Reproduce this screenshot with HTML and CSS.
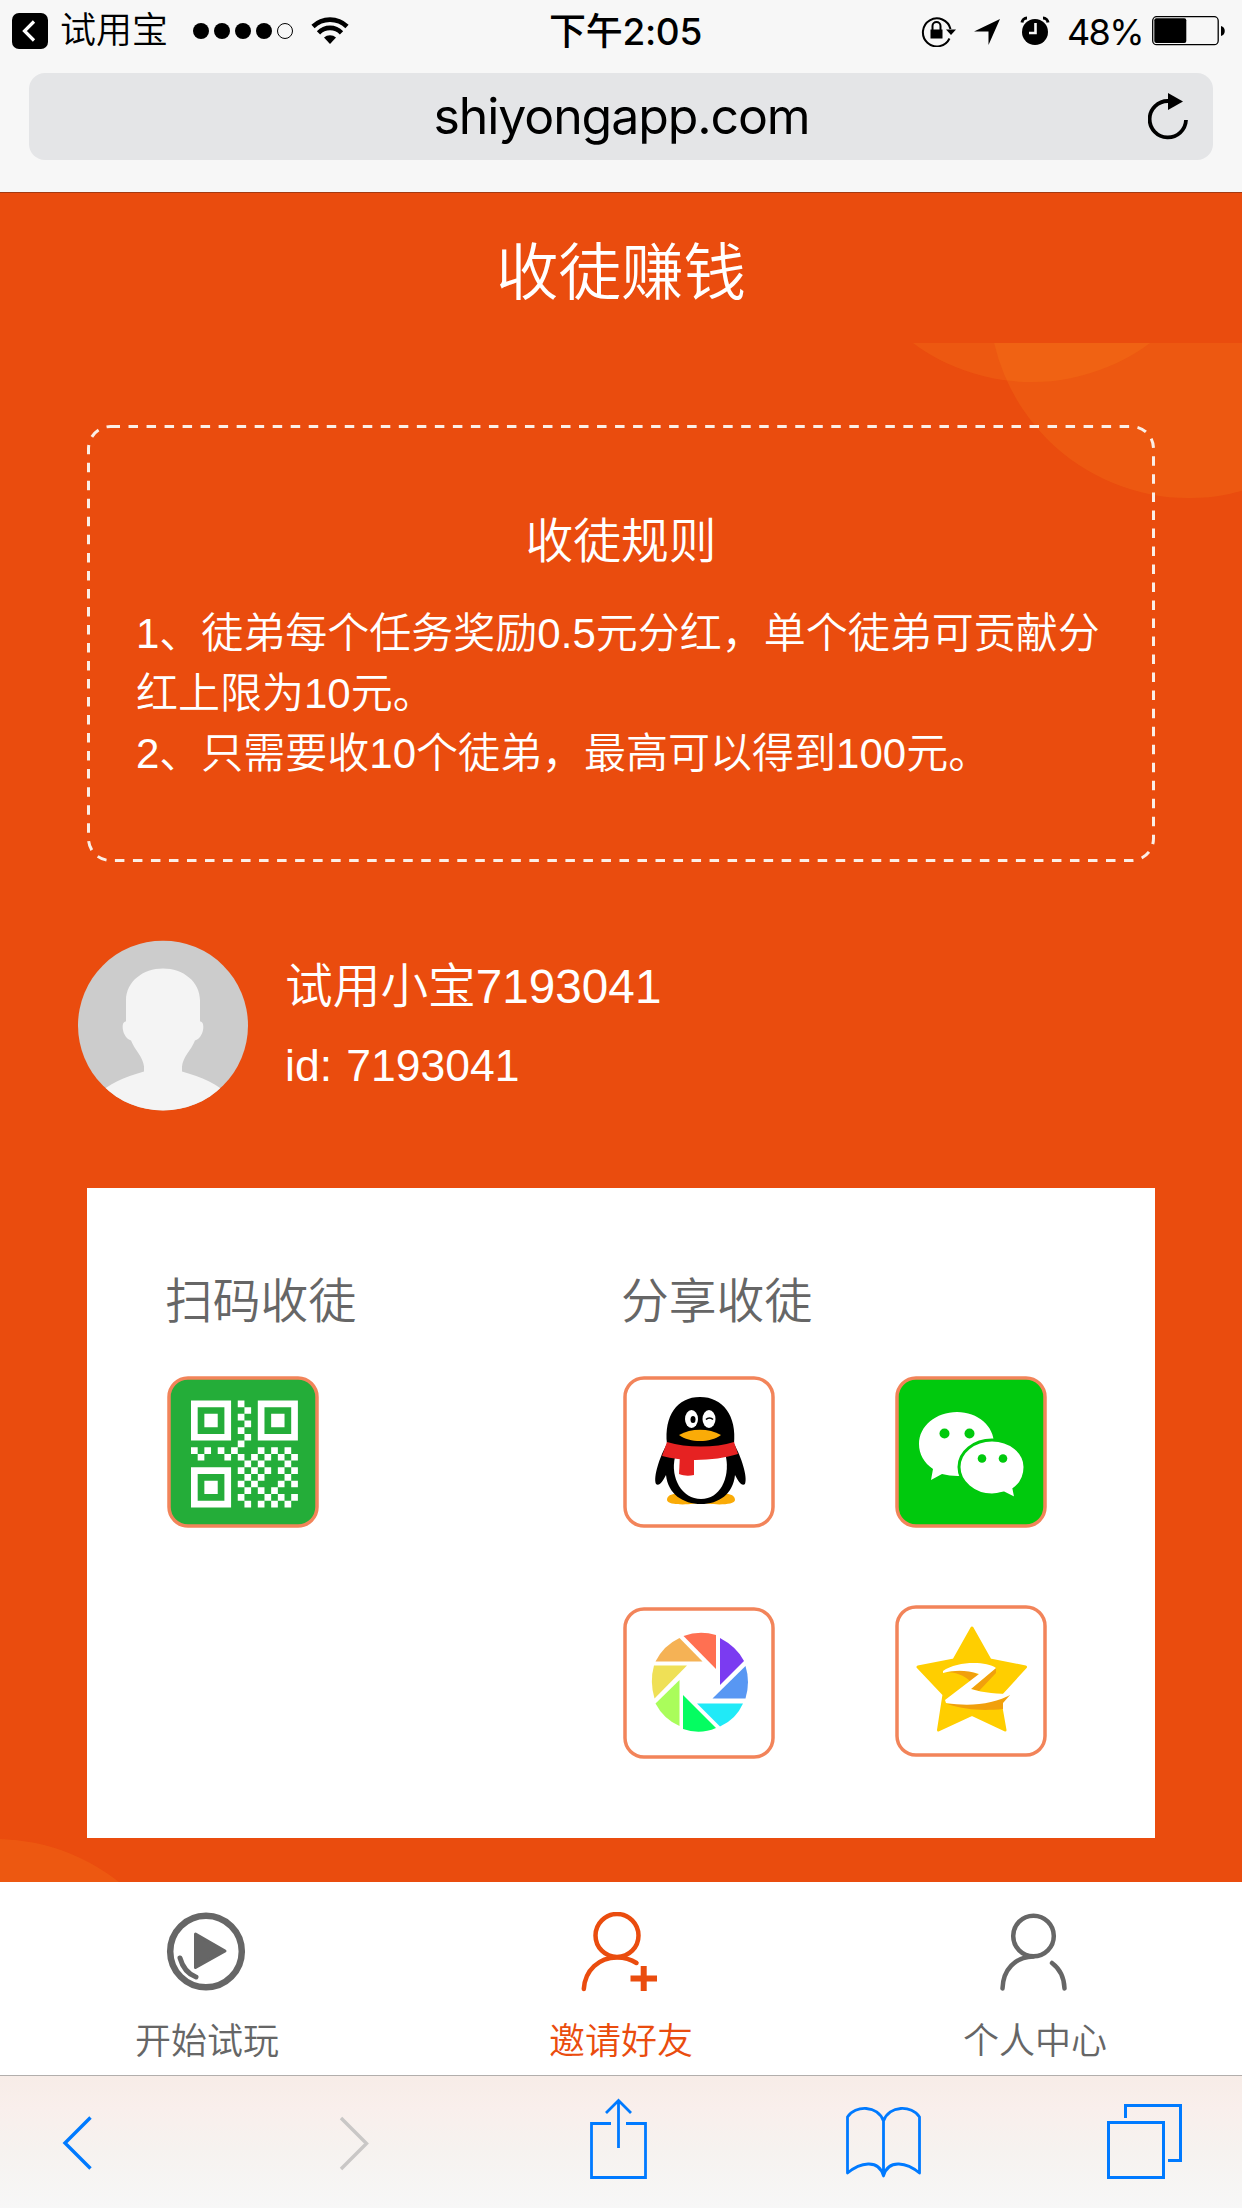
FILE: index.html
```html
<!DOCTYPE html>
<html lang="zh-CN">
<head>
<meta charset="utf-8">
<title>收徒赚钱</title>
<link rel="stylesheet" href="styles.css">
</head>
<body>
<div class="screen">
  <header class="browser">
    <div class="status">
      <div class="status-left">
        <svg class="back-app" width="36" height="36" viewBox="0 0 36 36"><rect width="36" height="36" rx="7"/><path d="M22 8.500l-9.500 9.500 9.500 9.500" fill="none" stroke="#fff" stroke-width="3.200"/></svg>
        <span class="status-app">试用宝</span>
        <svg class="signal" width="102" height="18" viewBox="0 0 102 18"><circle cx="9" cy="9" r="8"/><circle cx="30" cy="9" r="8"/><circle cx="51" cy="9" r="8"/><circle cx="72" cy="9" r="8"/><circle cx="93" cy="9" r="7.500" fill="none" stroke="#000"/></svg>
        <svg class="wifi" width="38" height="28" viewBox="0 0 38 28" fill="none" stroke="#000" stroke-width="4.600"><path d="M2 9.500a24.500 24.500 0 0 1 34 0M7.500 15.800a16 16 0 0 1 23 0"/><path d="M19 27l-6-6.500a9 9 0 0 1 12 0z" fill="#000" stroke="none"/></svg>
      </div>
      <span class="clock">下午2:05</span>
      <div class="status-right">
        <svg class="lock" width="36" height="32" viewBox="0 0 36 32"><path d="M28.500 23.500A14 14 0 1 1 29.500 14" fill="none" stroke="#000" stroke-width="2"/><path d="M25 14.500h10l-5 5.500z"/><rect x="9.500" y="14.500" width="12" height="9"/><path d="M11.500 15v-4a4 4 0 0 1 8 0v4" fill="none" stroke="#000" stroke-width="2"/></svg>
        <svg class="locate" width="28" height="28" viewBox="0 0 28 28"><path d="M27 1L15.500 27V13.500H1z"/></svg>
        <svg class="alarm" width="30" height="30" viewBox="0 0 30 30"><circle cx="15" cy="16" r="13"/><path d="M2 6.500a5 5 0 0 1 5-4.500M28 6.500A5 5 0 0 0 23 2" fill="none" stroke="#000" stroke-width="3"/><path d="M15.500 7v10H9" fill="none" stroke="#f7f7f7" stroke-width="2.600"/></svg>
        <span class="percent">48%</span>
        <svg class="battery" width="74" height="30" viewBox="0 0 74 30"><rect x=".7" y=".7" width="65.500" height="28" rx="4" fill="none" stroke="#000" stroke-width="1.300"/><rect x="2.300" y="2.300" width="32" height="24.800" rx="2"/><path d="M69 10c5 1 5 9 0 10z"/></svg>
      </div>
    </div>
    <div class="address">
      <span class="url">shiyongapp.com</span>
      <svg class="reload" width="42" height="48" viewBox="0 0 42 48"><path d="M38 28a18.200 18.200 0 1 1-18-19" fill="none" stroke="#000" stroke-width="3.800"/><path d="M20 1v17l15-8.500z"/></svg>
    </div>
  </header>

  <main class="page">
    <h1 class="page-title">收徒赚钱</h1>
    <div class="content">
      <svg class="bubbles" width="1242" height="1539" viewBox="0 0 1242 1539"><g fill="#fc8a1e" fill-opacity=".21"><circle cx="1031.500" cy="-160.500" r="199.500"/><circle cx="1189" cy="-45" r="200"/><circle cx="-5" cy="1696" r="200"/></g></svg>
      <section class="rules">
        <svg class="rules-frame" width="1068" height="437" viewBox="0 0 1068 437"><rect x="1.500" y="1.500" width="1065" height="434" rx="22" fill="none" stroke="#fbeee6" stroke-width="3" stroke-dasharray="9.500 8.520"/></svg>
        <h2 class="rules-title">收徒规则</h2>
        <p class="rule">1、徒弟每个任务奖励0.5元分红，单个徒弟可贡献分<br>红上限为10元。</p>
        <p class="rule">2、只需要收10个徒弟，最高可以得到100元。</p>
      </section>
      <section class="user">
        <svg class="avatar" width="170" height="171" viewBox="0 0 170 170"><defs><clipPath id="round"><circle cx="85" cy="85" r="85"/></clipPath></defs><g clip-path="url(#round)"><path fill="#ccc" d="M0 0h170v170H0z"/><path fill="#f4f4f4" d="M48 81V60C48 41 65 28 85 28s37 13 37 32v21c4 0 4 7 2 12-2 4-4 6-7 7-4 10-12 16-13 26v5c20 6 36 12 46 24v30H20v-30c10-12 26-18 46-24v-5c-1-10-9-16-13-26-3-1-5-3-7-7-2-5-2-12 2-12z"/></g></svg>
        <div class="user-text">
          <div class="user-name">试用小宝7193041</div>
          <div class="user-id">id: 7193041</div>
        </div>
      </section>
      <section class="card">
        <div class="scan">
          <h3 class="card-title">扫码收徒</h3>
          <svg class="app" width="152" height="152" viewBox="0 0 152 152"><rect x="2" y="2" width="148" height="148" rx="19" fill="#24ad39" stroke="#f2845a" stroke-width="3.500"/><g transform="translate(24 24.500) scale(6.680)" fill="#fff"><path fill-rule="evenodd" d="M0 0h6v6H0zM1 1v4h4V1zM2 2h2v2H2zM10 0h6v6h-6zM11 1v4h4V1zM12 2h2v2h-2zM0 10h6v6H0zM1 11v4h4v-4zM2 12h2v2H2z"/><path d="M7 0h1v1H7zM8 1h1v1H8zM7 2h1v1H7zM8 3h1v1H8zM7 4h1v1H7zM8 5h1v1H8zM7 6h1v1H7zM0 7h1v1H0zM2 7h1v1H2zM4 7h1v1H4zM6 7h1v1H6zM10 7h1v1h-1zM12 7h1v1h-1zM14 7h1v1h-1zM1 8h1v1H1zM5 8h1v1H5zM7 8h1v1H7zM9 8h1v1H9zM11 8h1v1h-1zM13 8h1v1h-1zM15 8h1v1h-1zM8 9h1v1H8zM10 9h1v1h-1zM14 9h1v1h-1zM7 10h1v1H7zM9 10h1v1H9zM11 10h1v1h-1zM13 10h1v1h-1zM15 10h1v1h-1zM8 11h1v1H8zM10 11h1v1h-1zM14 11h1v1h-1zM7 12h1v1H7zM9 12h1v1H9zM13 12h1v1h-1zM15 12h1v1h-1zM8 13h1v1H8zM10 13h1v1h-1zM12 13h1v1h-1zM7 14h1v1H7zM11 14h1v1h-1zM13 14h1v1h-1zM15 14h1v1h-1zM8 15h1v1H8zM10 15h1v1h-1zM12 15h1v1h-1zM14 15h1v1h-1z"/></g></svg>
        </div>
        <div class="share">
          <h3 class="card-title">分享收徒</h3>
          <div class="apps">
            <svg class="app" width="152" height="152" viewBox="0 0 152 152"><rect x="2" y="2" width="148" height="148" rx="19" fill="#fff" stroke="#f2845a" stroke-width="3.500"/><path d="M44 124c0-5 6-7 13-6l21 8c-7 3-34 4-34-2zM112 124c0-5-6-7-13-6l-21 8c7 3 34 4 34-2z" fill="#faab07"/><path d="M44 68c-3-28 10-47 33-47s37 19 34 47c7 12 14 33 11 40-3 3-7-3-10-9-2 19-16 29-34 29s-33-10-35-29c-3 6-7 12-10 9-3-7 4-28 11-40z"/><path d="M52 81h51c4 21-6 42-25 42S47 102 52 81z" fill="#fff"/><path d="M44 66c20 6 48 6 67 0l4 12c-22 7-54 8-76 2z" fill="#e62222"/><path d="M57 78h14v21c-5 1-10 1-15-1z" fill="#e62222"/><ellipse cx="68.500" cy="43" rx="6.500" ry="9" fill="#fff"/><ellipse cx="86" cy="43" rx="6.500" ry="9" fill="#fff"/><ellipse cx="70" cy="43.500" rx="2.500" ry="3.500"/><path d="M83 43.500c2-2 5-2 7 0" fill="none" stroke="#000" stroke-width="1.700"/><path d="M56 59c12-7 30-7 42 0-11 8-31 8-42 0z" fill="#faab07"/></svg>
            <svg class="app" width="152" height="152" viewBox="0 0 152 152"><rect x="2" y="2" width="148" height="148" rx="19" fill="#00c90d" stroke="#f2845a" stroke-width="3.500"/><path fill="#fff" d="M62 36c-21 0-38 14-38 32 0 10 5 19 14 25l-2 11 11-6c5 1 10 2 16 2 14 0 36-14 36-32 0-18-16-32-37-32z"/><circle cx="49.500" cy="57.500" r="5" fill="#00c90d"/><circle cx="74.500" cy="57.500" r="5" fill="#00c90d"/><path fill="#fff" stroke="#00c90d" stroke-width="3" d="M97 64c-18 0-33 12-33 27s15 28 33 28c4 0 8-1 12-2l12 6-2-10c7-5 11-13 11-22 0-15-15-27-33-27z"/><circle cx="87" cy="82.500" r="4.300" fill="#00c90d"/><circle cx="108" cy="82.500" r="4.300" fill="#00c90d"/></svg>
            <svg class="app" width="152" height="152" viewBox="0 0 152 152"><rect x="2" y="2" width="148" height="148" rx="19" fill="#fff" stroke="#f2845a" stroke-width="3.500"/><path fill="#ff7052" d="M60.500 29q16-6 32.500-1v34z"/><path fill="#7b3bf1" d="M97 31q17 9 24 23L97 78z"/><path fill="#5897f3" d="M122.500 59q5 16 0 32.500h-33z"/><path fill="#20eaf7" d="M74 96.500h46q-7 16-23 23z"/><path fill="#04fd61" d="M60 88l33 33q-16 7-33 1z"/><path fill="#aafd5b" d="M56.500 73v46q-16-7-24-22.500z"/><path fill="#efe056" d="M31 58.500h33l-32.500 33q-5-17-.5-33z"/><path fill="#f5b255" d="M56.500 31l23 23.500h-47q8-16 24-23.500z"/></svg>
            <svg class="app app-zone" width="152" height="152" viewBox="0 0 152 152"><rect x="2" y="2" width="148" height="148" rx="19" fill="#fff" stroke="#f2845a" stroke-width="3.500"/><path d="M77 23l18 32 35.500 7L104 91l6 34-33-15.500L43.500 125 49 89.500 23 62l36-7z" fill="#ffce00" stroke="#ffce00" stroke-width="3" stroke-linejoin="round"/><path d="M49 67c12 0 20 3 27 10l8-7-10-5zM101 63v5L84 86l-8-2zM52 99c20 6 35 7 56 5v-6l7-8z" fill="#f1a00c"/><path d="M48 66c14-10 43-10 53-3L76 84c12 4 28 5 41 5-18 10-41 13-66 9l-1-3 34-26c-13-4-24-4-36-1z" fill="#fff"/></svg>
          </div>
        </div>
      </section>
    </div>
  </main>

  <nav class="tabs">
    <a class="tab"><svg class="tab-play" width="80" height="80" viewBox="0 0 80 80"><circle cx="40" cy="39.500" r="35.800" fill="none" stroke="#666" stroke-width="6.500"/><path d="M29.500 22L59 39 29.500 55.500z" fill="#666" stroke="#666" stroke-width="3" stroke-linejoin="round"/><path d="M14 46q4 14.500 16 19" fill="none" stroke="#666" stroke-width="5" stroke-linecap="round"/></svg><span>开始试玩</span></a>
    <a class="tab tab-active"><svg width="80" height="80" viewBox="0 0 80 80" fill="none" stroke="#ea4c0e" stroke-width="4.500" stroke-linecap="round"><circle cx="36" cy="23.500" r="21.500"/><path d="M2.800 77C4 58 18 45.500 36 45.500q11 0 19.500 5.500"/><path d="M49.500 66.500h26.500M62.700 54v25" stroke-width="6" stroke-linecap="butt"/></svg><span>邀请好友</span></a>
    <a class="tab"><svg width="80" height="80" viewBox="0 0 80 80" fill="none" stroke="#666" stroke-width="4.500" stroke-linecap="round"><circle cx="38.500" cy="24" r="20.300"/><path d="M7.500 76.500C8 57.500 20 45 38.500 44.500M57 51q12 9 12.500 25.500"/></svg><span>个人中心</span></a>
  </nav>

  <footer class="toolbar">
    <svg class="nav-back" width="40" height="60" viewBox="0 0 40 60" fill="none" stroke="#007aff" stroke-width="3.400"><path d="M32.500 4.500L7 30l25.500 25.500"/></svg>
    <svg class="nav-forward" width="40" height="60" viewBox="0 0 40 60" fill="none" stroke="#c9c7c6" stroke-width="3.400"><path d="M5 5l25.500 25.500L5 56"/></svg>
    <svg class="nav-share" width="60" height="84" viewBox="0 0 60 84" fill="none" stroke="#007aff" stroke-width="2.800"><path d="M22 26.500H2.500v54h54v-54H37M29.500 51V3M17 16L29.500 3.500 42 16"/></svg>
    <svg class="nav-book" width="78" height="76" viewBox="0 0 78 76" fill="none" stroke="#007aff" stroke-width="2.800" stroke-linejoin="round"><path d="M38.500 71V16C33 0 10 0 2.500 12v56c12-10 31-15 36 3 5-18 24-13 36-3V12C67 0 44 0 38.500 16"/></svg>
    <svg class="nav-pages" width="78" height="78" viewBox="0 0 78 78" fill="none" stroke="#007aff" stroke-width="3"><path d="M3.500 20.500h55v55h-55zM20.500 16V3.500h55v55H63"/></svg>
  </footer>
</div>
</body>
</html>
```
FILE: styles.css
```css
* { box-sizing: border-box; }
body {
  margin: 0;
  font-family: "Liberation Sans", "Noto Sans CJK SC DemiLight", "Noto Sans CJK SC", sans-serif;
}
h1, h2, h3, p { margin: 0; font-weight: 350; }
svg { display: block; flex: none; }

.screen {
  width: 1242px;
  height: 2208px;
  display: flex;
  flex-direction: column;
  overflow: hidden;
}

/* Browser chrome */
.browser {
  height: 193px;
  background: #f7f7f7;
  border-bottom: 1px solid #a33a12;
  font-family: Inter, "Noto Sans CJK SC", sans-serif;
}
.status {
  height: 73px;
  padding: 0 16px 14px 12px;
  display: grid;
  grid-template-columns: 537px auto 1fr;
  align-items: center;
  font-size: 36px;
  line-height: 58px;
}
.status-left, .status-right { display: flex; align-items: center; }
.status-right { justify-content: flex-end; }
.status-app { margin-left: 12px; font-weight: 350; margin-top: -2px; }
.signal { margin-left: 24px; }
.wifi { margin-left: 17px; }
.clock { font-weight: 500; font-size: 37px; padding-top: 3px; letter-spacing: -0.3px; }
.locate { margin: 2px 0 0 16px; }
.alarm { margin-left: 19px; }
.percent { margin: 2px 9px 0 17px; letter-spacing: -1.6px; }
.address {
  height: 87px;
  margin: 0 29px;
  padding: 0 23px 2px 66px;
  display: flex;
  align-items: center;
  border-radius: 16px;
  background: #e4e5e7;
}
.url {
  flex: 1;
  text-align: center;
  font-size: 50px;
  letter-spacing: -1.1px;
}

/* Page */
.page {
  height: 1689px;
  color: #fff;
  background: #ea4c0e;
}
.page-title {
  height: 150px;
  padding-top: 5px;
  text-align: center;
  font-size: 62.500px;
  line-height: 150px;
}
.content {
  position: relative;
  height: 1539px;
  padding: 82px 87px 0;
  overflow: hidden;
}
.bubbles { position: absolute; left: 0; top: 0; }
.rules {
  position: relative;
  height: 437px;
  padding: 82px 49px 0;
}
.rules-frame { position: absolute; left: 0; top: 0; }
.rules-title {
  margin-bottom: 27px;
  text-align: center;
  font-size: 47.800px;
  line-height: 70px;
}
.rule { font-size: 42px; line-height: 60px; white-space: nowrap; }
.user {
  position: relative;
  display: flex;
  margin: 78px 0 77px -9px;
  font-weight: 350;
}
.user-text { padding: 12px 0 0 37px; }
.user-name { font-size: 47.700px; line-height: 70px; }
.user-id { font-size: 44.500px; line-height: 88px; word-spacing: 2px; }
.card {
  position: relative;
  height: 650px;
  padding: 79px 0 0 80px;
  display: flex;
  background: #fff;
  color: #666;
}
.scan { width: 456px; }
.card-title {
  margin: 0 0 39px -2px;
  font-size: 47.800px;
  line-height: 70px;
}
.apps {
  display: grid;
  grid-template-columns: 152px 152px;
  gap: 79px 120px;
}
.app-zone { margin-top: -2px; }

/* Site navigation */
.tabs {
  height: 193px;
  display: grid;
  grid-template-columns: repeat(3, 1fr);
  background: #fff;
  font-size: 36px;
  font-weight: 350;
  line-height: 50px;
  color: #666;
}
.tab {
  display: flex;
  flex-direction: column;
  align-items: center;
  gap: 25px;
  padding-top: 30px;
}
.tab-play { margin-right: 3px; }
.tab-active { color: #ea4c0e; }

/* Browser toolbar */
.toolbar {
  height: 133px;
  padding-left: 58px;
  display: flex;
  align-items: center;
  border-top: 1px solid #b2aeac;
  background: linear-gradient(#f7ece7, #f9efec 25%, #f6f2ef 55%, #f7f7f7);
}
.nav-back { margin: 2px 0 0; }
.nav-forward { margin: 1px 0 0 238px; }
.nav-share { margin: 0 0 6px 213px; }
.nav-book { margin: 1px 0 0 196px; }
.nav-pages { margin: 0 0 2px 182px; }
```
